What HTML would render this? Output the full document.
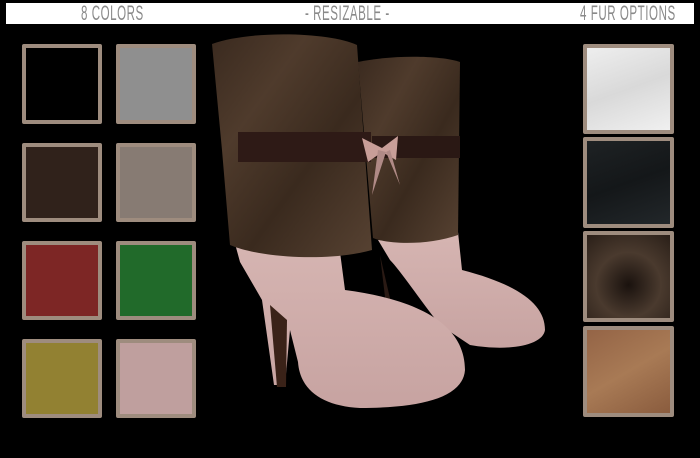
<!DOCTYPE html>
<html><head><style>
body{margin:0;width:700px;height:458px;background:#000;position:relative;overflow:hidden;font-family:"Liberation Sans Narrow","Liberation Sans",sans-serif}
.bar{position:absolute;left:6px;top:3px;width:688px;height:21px;background:#fff}
.t{position:absolute;top:0px;font-size:21px;line-height:21px;color:#8a8a8a;transform:scaleX(.55);transform-origin:left top;white-space:nowrap;letter-spacing:1px}
.s{position:absolute;box-sizing:border-box;border:4px solid #9e8c7e;border-radius:2px}
</style></head><body>
<div class="bar">
<span class="t" style="left:75px">8 COLORS</span>
<span class="t" style="left:299px">- RESIZABLE -</span>
<span class="t" style="left:574px">4 FUR OPTIONS</span>
</div>
<div class="s" style="left:22px;top:44px;width:80px;height:80px;background:#000"></div>
<div class="s" style="left:116px;top:44px;width:80px;height:80px;background:#8f8f8f"></div>
<div class="s" style="left:22px;top:143px;width:80px;height:79px;background:#30221b"></div>
<div class="s" style="left:116px;top:143px;width:80px;height:79px;background:#877b73"></div>
<div class="s" style="left:22px;top:241px;width:80px;height:79px;background:#7d2625"></div>
<div class="s" style="left:116px;top:241px;width:80px;height:79px;background:#216a2a"></div>
<div class="s" style="left:22px;top:339px;width:80px;height:79px;background:#928132"></div>
<div class="s" style="left:116px;top:339px;width:80px;height:79px;background:#bf9f9e"></div>

<div class="s" style="left:583px;top:44px;width:91px;height:90px;background:linear-gradient(160deg,#eee,#d9d9d9 50%,#f0f0f0)"></div>
<div class="s" style="left:583px;top:137px;width:91px;height:91px;background:linear-gradient(160deg,#1e2224,#141719 50%,#22272a)"></div>
<div class="s" style="left:583px;top:231px;width:91px;height:91px;background:radial-gradient(circle at 50% 60%,#1a120e,#4a3a2e 50%,#2a1f18)"></div>
<div class="s" style="left:583px;top:326px;width:91px;height:91px;background:linear-gradient(150deg,#946446,#a87a55 50%,#8a5c3e)"></div>

<svg style="position:absolute;left:0;top:0" width="700" height="458">
<defs>
<linearGradient id="fur" x1="0" y1="0" x2="1" y2="1"><stop offset="0" stop-color="#3a2a1f"/><stop offset=".3" stop-color="#4f3b2c"/><stop offset=".6" stop-color="#3a2a1e"/><stop offset="1" stop-color="#574232"/></linearGradient>
<linearGradient id="pink" x1="0" y1="0" x2="0" y2="1"><stop offset="0" stop-color="#d6b5b2"/><stop offset="1" stop-color="#c7a3a1"/></linearGradient>
</defs>
<!-- back boot -->
<path d="M378,240 L458,232 L462,270 C520,285 545,305 545,330 C543,345 510,352 470,345 L440,325 C420,300 400,270 390,260 Z" fill="url(#pink)"/>
<path d="M380,255 L395,320 L388,322 Z" fill="#2a1a14"/>
<path d="M358,62 C390,55 440,55 460,62 L458,235 C430,245 390,245 373,238 Z" fill="url(#fur)"/>
<!-- front boot -->
<path d="M234,240 L340,252 L345,290 C420,300 465,325 465,370 C463,398 420,408 360,408 C322,406 300,390 298,362 L290,330 L285,385 L274,385 L262,300 L240,262 Z" fill="url(#pink)"/>
<path d="M270,305 L287,320 L286,387 L277,387 Z" fill="#3a2218"/>
<path d="M212,44 C250,30 330,32 357,45 L372,250 C330,262 260,258 230,245 L222,150 Z" fill="url(#fur)"/>
<rect x="238" y="132" width="133" height="30" fill="#2e1a16"/>
<rect x="372" y="136" width="88" height="22" fill="#2a1814"/>
<path d="M362,138 L382,148 L398,136 L396,160 L382,152 L368,162 Z" fill="#c89e98"/>
<path d="M378,150 L372,195 L386,152 Z M386,152 L400,185 L390,150 Z" fill="#b08a86"/>
</svg>
</body></html>
